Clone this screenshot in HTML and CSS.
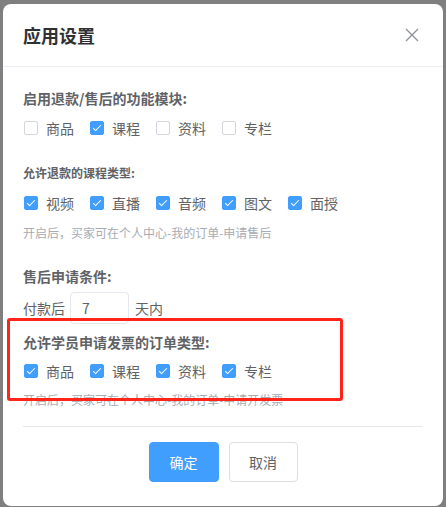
FILE: index.html
```html
<!DOCTYPE html>
<html lang="zh-CN">
<head>
    <meta charset="UTF-8">
    <meta name="viewport" content="width=device-width, initial-scale=1.0">
    <title>应用设置</title>
    <link rel="stylesheet" href="styles.css">
</head>
<body>
    <div class="dialog">
        <div class="dialog-header">
            <span class="dialog-title">应用设置</span>
            <svg class="dialog-close" width="14" height="14" viewBox="0 0 14 14">
                <path d="M1 1 L13 13 M13 1 L1 13" stroke="#909399" stroke-width="1.4" fill="none"/>
            </svg>
        </div>

        <div class="dialog-body">
            <div class="section">
                <div class="section-label">启用退款/售后的功能模块:</div>
                <div class="options">
                    <label class="check"><span class="check-box"></span><span class="check-text">商品</span></label>
                    <label class="check"><span class="check-box checked"></span><span class="check-text">课程</span></label>
                    <label class="check"><span class="check-box"></span><span class="check-text">资料</span></label>
                    <label class="check"><span class="check-box"></span><span class="check-text">专栏</span></label>
                </div>
            </div>

            <div class="section section-sub">
                <div class="section-label small">允许退款的课程类型:</div>
                <div class="options">
                    <label class="check"><span class="check-box checked"></span><span class="check-text">视频</span></label>
                    <label class="check"><span class="check-box checked"></span><span class="check-text">直播</span></label>
                    <label class="check"><span class="check-box checked"></span><span class="check-text">音频</span></label>
                    <label class="check"><span class="check-box checked"></span><span class="check-text">图文</span></label>
                    <label class="check"><span class="check-box checked"></span><span class="check-text">面授</span></label>
                </div>
                <div class="hint">开启后，买家可在个人中心-我的订单-申请售后</div>
            </div>

            <div class="section section-cond">
                <div class="section-label">售后申请条件:</div>
                <div class="days-row">
                    <span>付款后</span>
                    <input class="days-input" type="text" value="7">
                    <span>天内</span>
                </div>
            </div>

            <div class="section section-invoice">
                <div class="section-label">允许学员申请发票的订单类型:</div>
                <div class="options tight">
                    <label class="check"><span class="check-box checked"></span><span class="check-text">商品</span></label>
                    <label class="check"><span class="check-box checked"></span><span class="check-text">课程</span></label>
                    <label class="check"><span class="check-box checked"></span><span class="check-text">资料</span></label>
                    <label class="check"><span class="check-box checked"></span><span class="check-text">专栏</span></label>
                </div>
                <div class="hint tight">开启后，买家可在个人中心-我的订单-申请开发票</div>
            </div>
        </div>

        <div class="dialog-footer">
            <button class="btn btn-primary">确定</button>
            <button class="btn">取消</button>
        </div>

        <div class="highlight"></div>
    </div>
</body>
</html>
```

FILE: styles.css
```css
* {
    margin: 0;
    padding: 0;
    box-sizing: border-box;
    font-family: "Noto Sans CJK SC", "Noto Sans", sans-serif;
}

html, body {
    width: 100%;
    height: 100%;
    overflow: hidden;
    background: #7f7f7f;
}

.dialog {
    position: relative;
    width: 440px;
    height: 502px;
    margin: 4px 0 0 3px;
    background: #fff;
    border-radius: 8px;
}

.dialog-header {
    height: 63px;
    padding: 0 24px 0 20px;
    display: flex;
    justify-content: space-between;
    align-items: center;
    border-bottom: 1px solid #ebeef5;
}

.dialog-title {
    font-size: 18px;
    font-weight: bold;
    color: #303133;
    line-height: 24px;
}

.dialog-close {
    display: block;
}

.dialog-body {
    padding: 21px 20px 0;
}

.section-label {
    font-size: 14px;
    font-weight: bold;
    line-height: 20px;
    color: #606266;
}

.section-label.small {
    font-size: 12px;
}

.section-sub {
    margin-top: 25px;
}

.section-cond {
    margin-top: 23px;
}

.section-invoice {
    margin-top: 8px;
}

.options {
    display: flex;
    gap: 16px;
    margin-top: 10px;
    padding-left: 1px;
}

.options.tight {
    margin-top: 9px;
}

.check {
    display: flex;
    align-items: center;
    height: 20px;
    font-size: 14px;
    color: #606266;
}

.check-box {
    position: relative;
    flex-shrink: 0;
    width: 14px;
    height: 14px;
    border: 1px solid #d4d7de;
    border-radius: 2px;
    background: #fff;
}

.check-box.checked {
    background: #409eff;
    border-color: #409eff;
}

.check-box.checked::after {
    content: "";
    position: absolute;
    left: 4px;
    top: 1px;
    width: 3px;
    height: 7px;
    border: 1.5px solid #fff;
    border-top: 0;
    border-left: 0;
    transform: rotate(45deg);
}

.check-text {
    margin-left: 8px;
}

.hint {
    margin-top: 10px;
    font-size: 12px;
    line-height: 20px;
    color: #a8abb2;
}

.hint.tight {
    margin-top: 9px;
}

.days-row {
    display: flex;
    align-items: center;
    gap: 5px;
    margin-top: 6px;
    font-size: 14px;
    color: #606266;
}

.days-input {
    width: 59px;
    height: 32px;
    padding: 0 11px;
    margin-right: 1px;
    border: 1px solid #e4e7ed;
    border-radius: 4px;
    font-size: 14px;
    color: #606266;
    outline: none;
}

.dialog-footer {
    margin: 16px 20px 0;
    padding-top: 15px;
    border-top: 1px solid #e4e7ed;
    display: flex;
    justify-content: center;
    gap: 10px;
}

.btn {
    width: 69px;
    height: 40px;
    border: 1px solid #dcdfe6;
    border-radius: 4px;
    background: #fff;
    color: #606266;
    font-size: 14px;
}

.btn-primary {
    width: 70px;
    background: #409eff;
    border-color: #409eff;
    color: #fff;
}

/* red annotation frame */
.highlight {
    position: absolute;
    left: 4px;
    top: 314px;
    width: 336px;
    height: 83px;
    border: 3px solid #ff2419;
    border-radius: 3px;
    pointer-events: none;
}
```
